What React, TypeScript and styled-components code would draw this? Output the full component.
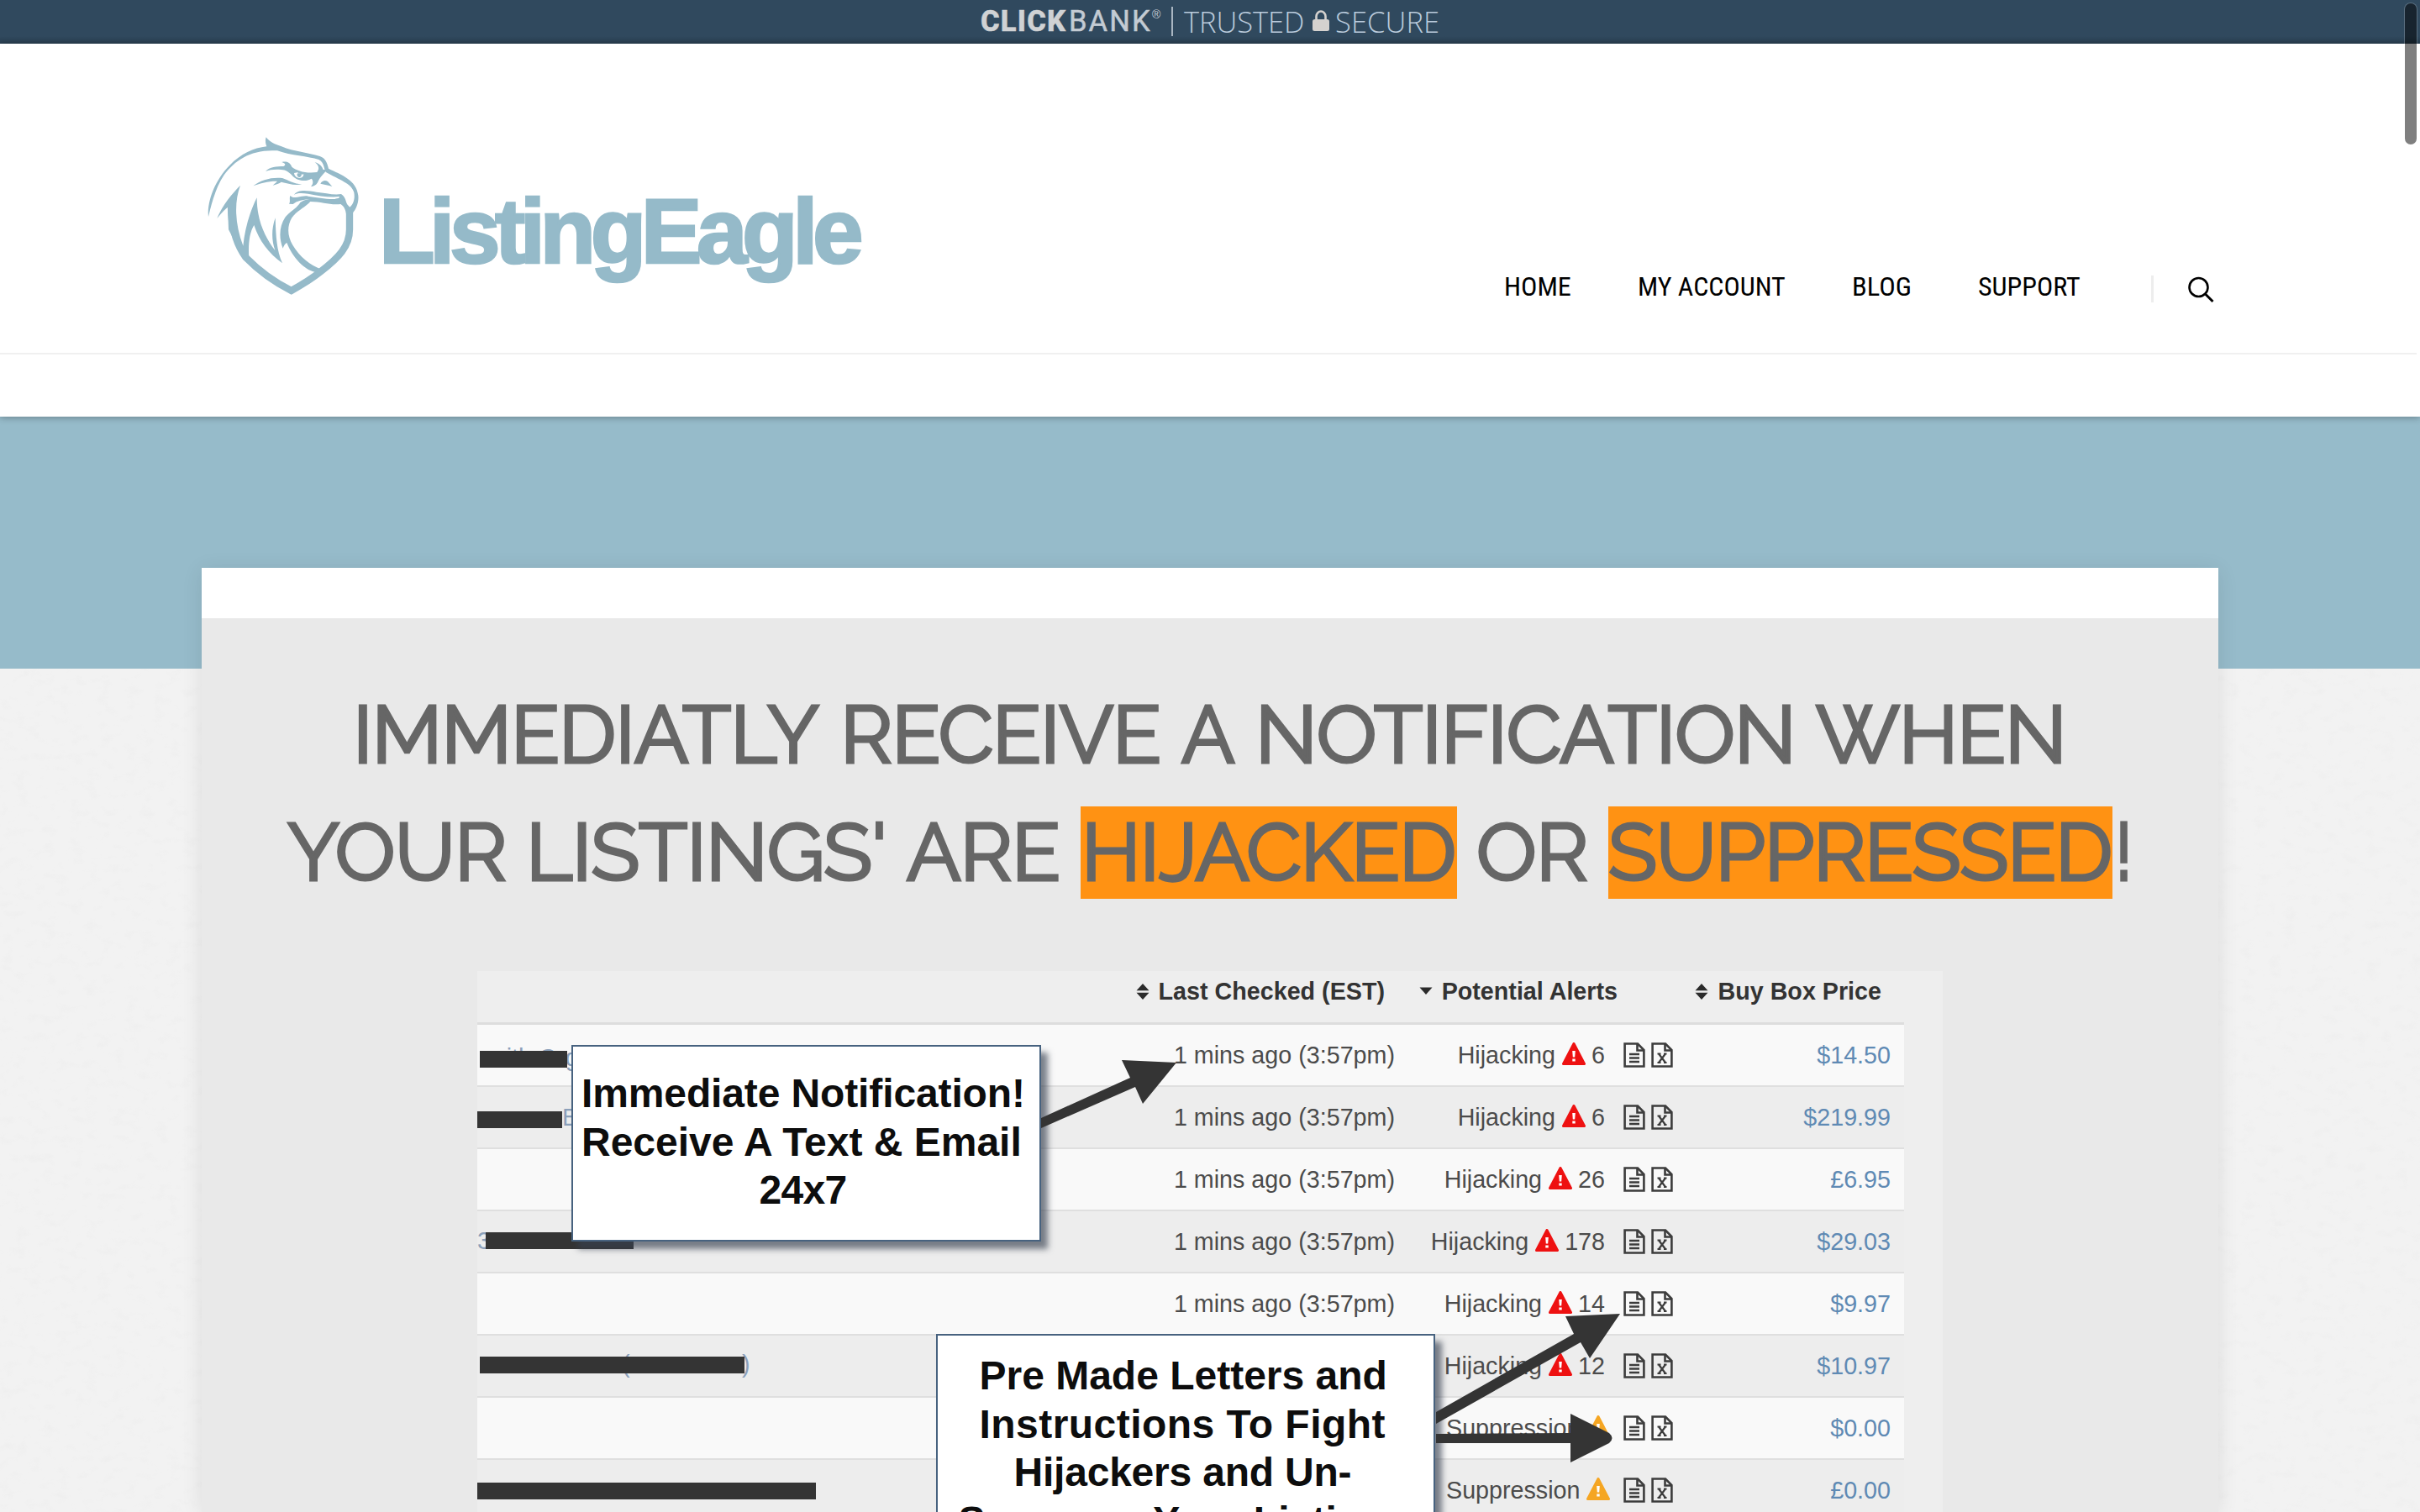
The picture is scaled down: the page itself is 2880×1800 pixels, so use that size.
import React, { useLayoutEffect, useRef, useState } from "react";
import styled, { createGlobalStyle } from "styled-components";

const GlobalStyle = createGlobalStyle`
  * { box-sizing: border-box; }
  html, body { margin: 0; padding: 0; background: #f2f2f2; }
  body { overflow: hidden; font-family: "Liberation Sans", Arial, sans-serif; }
`;

/* ---------- text fitted to a given ink width ---------- */

const FitBox = styled.span<{ $w: number }>`
  display: inline-block;
  flex: none;
  width: ${(p) => p.$w}px;
  white-space: nowrap;
  text-align: left;
`;

const FitInner = styled.span`
  display: inline-block;
  transform-origin: 0 50%;
  font-variant-ligatures: none;
`;

type FitProps = { w: number; children: string; stretch?: boolean };

function Fit({ w, children, stretch }: FitProps) {
  const ref = useRef<HTMLSpanElement>(null);
  const [style, setStyle] = useState<React.CSSProperties>({});

  useLayoutEffect(() => {
    const ctx = document.createElement("canvas").getContext("2d");
    if (!ref.current || !ctx) return;
    const cs = getComputedStyle(ref.current);
    ctx.font = `${cs.fontWeight} ${cs.fontSize} ${cs.fontFamily}`;
    const m = ctx.measureText(children);
    const left = -m.actualBoundingBoxLeft;
    const ink = m.actualBoundingBoxRight + m.actualBoundingBoxLeft;
    if (stretch || children.length < 2) {
      const s = w / ink;
      setStyle({ transform: `translateX(${left * -s}px) scaleX(${s})` });
    } else {
      setStyle({
        letterSpacing: (w - ink) / (children.length - 1),
        transform: `translateX(${-left}px)`,
      });
    }
  }, [w, children, stretch]);

  return (
    <FitBox $w={w}>
      <FitInner ref={ref} style={style}>
        {children}
      </FitInner>
    </FitBox>
  );
}

/* ---------- page ---------- */

const Page = styled.div`
  position: relative;
  width: 2880px;
  height: 1800px;
  overflow: hidden;
  background: #f2f2f2;
`;

const Paper = styled.svg`
  position: absolute;
  left: 0;
  top: 796px;
  width: 2880px;
  height: 1004px;
`;

const TrustBar = styled.div`
  display: flex;
  height: 52px;
  padding-left: 1168px;
  background: linear-gradient(#30495e 0, #30495e 43px, #2a4052 52px);
  color: #c9d0d8;
  font-size: 34.5px;
  line-height: 51px;
`;

const Brand = styled.div<{ $bold?: boolean; $gap?: number }>`
  font-family: Roboto, sans-serif;
  font-weight: ${(p) => (p.$bold ? 800 : 400)};
  color: ${(p) => (p.$bold ? "#d0d2d4" : "#c3cbd3")};
  -webkit-text-stroke: 0.5px;
  margin-left: ${(p) => p.$gap ?? 0}px;
`;

const Registered = styled.div`
  margin-left: 2px;
  width: 11px;
  font-size: 14px;
  line-height: 35px;
`;

const TrustRule = styled.div`
  width: 2px;
  height: 35px;
  margin: 8px 13px 0 12px;
  background: #a9b6c2;
`;

const TrustWord = styled.div`
  font-family: "Open Sans", sans-serif;
  font-weight: 300;
  color: #b9cadb;
`;

const Lock = styled.svg`
  width: 20px;
  height: 25px;
  margin: 12px 8px 0 11px;
`;

const Header = styled.header`
  position: relative;
  z-index: 1;
  height: 444px;
  background: #fff;
  box-shadow: 0 1px 8px rgba(0, 0, 0, 0.32);
`;

const HeaderMain = styled.div`
  display: flex;
  width: 2876px;
  height: 370px;
  border-bottom: 2px solid #f0f0f0;
  padding-left: 220px;
`;

const Eagle = styled.svg`
  width: 240px;
  height: 230px;
  margin-top: 88px;
`;

const LogoName = styled.div`
  margin: 161px 0 0 -2px;
  width: 567px;
  font-weight: 700;
  font-size: 109px;
  line-height: 124px;
  color: #95bac9;
  -webkit-text-stroke: 2.6px #95bac9;
`;

const Nav = styled.nav`
  display: flex;
  margin-left: 767px;
  padding-top: 269px;
  font-family: "Roboto Condensed", Roboto, sans-serif;
  font-size: 32px;
  line-height: 40px;
  color: #000;
`;

const NavLink = styled.a<{ $gap: number }>`
  margin-right: ${(p) => p.$gap}px;
`;

const NavRule = styled.div`
  width: 3px;
  height: 32px;
  margin-top: 7px;
  background: #ededed;
`;

const SearchIcon = styled.svg`
  width: 32px;
  height: 32px;
  margin: 8px 0 0 41px;
`;

const HeroBand = styled.div`
  position: relative;
  height: 300px;
  background: #96bbca;
`;

const Panel = styled.main`
  position: relative;
  width: 2400px;
  height: 1124px;
  margin: -120px auto 0;
  padding-top: 60px;
  background: #fff;
  box-shadow: 0 3px 24px rgba(0, 0, 0, 0.09);
`;

const Feature = styled.section`
  height: 1064px;
  padding-top: 69px;
  background: #e9e9e9;
`;

const HeadLine = styled.div<{ $left: number }>`
  display: flex;
  height: 140px;
  padding-left: ${(p) => p.$left}px;
  font-family: Raleway, Lato, sans-serif;
  font-size: 95.5px;
  line-height: 139px;
  color: #666;
  -webkit-text-stroke: 3.2px #666;
`;

const Word = styled.span<{ $gap: number }>`
  margin-right: ${(p) => p.$gap}px;
`;

const Mark = styled.span<{ $gap: number; $pad: number; $w: number }>`
  width: ${(p) => p.$w}px;
  height: 110px;
  margin: 15px ${(p) => p.$gap}px 0 0;
  padding-left: ${(p) => p.$pad}px;
  line-height: 109px;
  background: #ff9213;
`;

/* ---------- alert table ---------- */

const Shot = styled.div`
  position: relative;
  width: 1744px;
  height: 644px;
  margin: 71px 0 0 328px;
  overflow: hidden;
  background: #eeeeee;
  font-size: 28.7px;
  color: #4b4b4b;
`;

const TableHead = styled.div`
  display: flex;
  align-items: center;
  width: 1698px;
  height: 64px;
  padding-bottom: 12px;
  border-bottom: 3px solid #dddddd;
  font-weight: 700;
  color: #333;
`;

const HeadCell = styled.div<{ $w: number }>`
  display: flex;
  justify-content: flex-end;
  align-items: center;
  gap: 11px;
  width: ${(p) => p.$w}px;
`;

const Row = styled.div<{ $odd: boolean }>`
  display: flex;
  align-items: center;
  width: 1698px;
  height: 74px;
  border-bottom: 2px solid #dfdfdf;
  background: ${(p) => (p.$odd ? "#f9f9f9" : "#ededed")};
`;

const Product = styled.div`
  position: relative;
  width: 778px;
  height: 72px;
`;

const Scrap = styled.span<{ $x: number; $y: number }>`
  position: absolute;
  left: ${(p) => p.$x}px;
  top: ${(p) => p.$y}px;
  line-height: 32px;
  color: #8ba0ba;
`;

const Redaction = styled.div<{ $x: number; $y: number; $w: number }>`
  position: absolute;
  left: ${(p) => p.$x}px;
  top: ${(p) => p.$y}px;
  width: ${(p) => p.$w}px;
  height: 20px;
  background: #343434;
`;

const Checked = styled.div`
  width: 314px;
  margin-right: 2px;
  text-align: right;
`;

const Alert = styled.div<{ $bare: boolean }>`
  display: flex;
  justify-content: flex-end;
  align-items: center;
  gap: 7.5px;
  width: ${(p) => (p.$bare ? 254 : 248)}px;
  margin-right: ${(p) => (p.$bare ? 16 : 22)}px;
`;

const Triangle = styled.svg`
  width: 28px;
  height: 27px;
  margin-top: -4px;
`;

const Docs = styled.div`
  display: flex;
  gap: 7px;
`;

const Doc = styled.svg`
  width: 26px;
  height: 30px;
`;

const Price = styled.div`
  flex: 1;
  padding-right: 16px;
  text-align: right;
  color: #5f8ab4;
`;

const Callout = styled.div<{ $x: number; $y: number; $w: number; $h: number; $pad: number; $shift: number }>`
  position: absolute;
  left: ${(p) => p.$x}px;
  top: ${(p) => p.$y}px;
  width: ${(p) => p.$w}px;
  height: ${(p) => p.$h}px;
  padding: ${(p) => p.$pad}px ${(p) => p.$shift}px 0 0;
  border: 2px solid #47627f;
  background: #fff;
  box-shadow: 8px 9px 7px rgba(55, 65, 80, 0.65);
  display: flex;
  flex-direction: column;
  align-items: center;
  font-weight: 700;
  font-size: 48px;
  line-height: 57.6px;
  color: #0d0d0d;
`;

const Arrows = styled.svg`
  position: absolute;
  left: 0;
  top: 0;
  width: 1744px;
  height: 644px;
`;

const ScrollThumb = styled.div`
  position: absolute;
  z-index: 2;
  left: 2862px;
  top: 4px;
  width: 14px;
  height: 168px;
  border-radius: 7px;
  background: rgba(0, 0, 0, 0.5);
  box-shadow: 0 0 0 1px rgba(255, 255, 255, 0.2);
`;

type AlertRow = { kind: string; count?: string; price: string };

const rows: AlertRow[] = [
  { kind: "Hijacking", count: "6", price: "$14.50" },
  { kind: "Hijacking", count: "6", price: "$219.99" },
  { kind: "Hijacking", count: "26", price: "£6.95" },
  { kind: "Hijacking", count: "178", price: "$29.03" },
  { kind: "Hijacking", count: "14", price: "$9.97" },
  { kind: "Hijacking", count: "12", price: "$10.97" },
  { kind: "Suppression", price: "$0.00" },
  { kind: "Suppression", price: "£0.00" },
];

const hidden: Record<number, { x: number; y: number; w: number }> = {
  0: { x: 3, y: 31, w: 104 },
  1: { x: 0, y: 29, w: 101 },
  3: { x: 10, y: 25, w: 176 },
  5: { x: 3, y: 25, w: 315 },
  7: { x: 0, y: 27, w: 403 },
};

const scraps: Record<number, { x: number; y: number; text: string }[]> = {
  0: [{ x: 14, y: 23, text: "with Org" }],
  1: [{ x: 101, y: 20, text: "Ba" }],
  3: [{ x: 0, y: 19, text: "3" }],
  5: [{ x: 315, y: 18, text: ")" }, { x: 172, y: 18, text: "(" }],
};

function SortIcon() {
  return (
    <svg width="16" height="19" viewBox="0 0 16 19">
      <path d="M8 0 15.5 8.300H.5zM8 19 .5 10.700h15z" fill="#2b2b2b" />
    </svg>
  );
}

function CaretIcon() {
  return (
    <svg width="16" height="19" viewBox="0 0 16 19">
      <path d="M.5 4.500h15L8 13z" fill="#2b2b2b" />
    </svg>
  );
}

function WarningIcon({ color }: { color: string }) {
  return (
    <Triangle viewBox="0 0 28 27">
      <path d="M14 1.500 26.500 25.500H1.500z" fill={color} stroke={color} strokeWidth="3" strokeLinejoin="round" />
      <path d="M12.2 10h3.6l-.6 7.5h-2.4zM12.3 19.4h3.4v3.2h-3.4z" fill="#fff" />
    </Triangle>
  );
}

function FileIcon({ sheet }: { sheet?: boolean }) {
  return (
    <Doc viewBox="0 0 26 30" fill="none" stroke="#3c3c3c" strokeWidth="2.6">
      <path d="M1.6 1.5H17L24.4 9v19.500H1.600z" />
      <path d="M16.500 1.500V9.500H24.400" />
      {sheet ? (
        <path d="M9 13.500 17 24M17 13.500 9 24M7.500 13.500h4M15 13.500h3.500M7.500 24h4M15 24h3.500" strokeWidth="2.200" />
      ) : (
        <path d="M7 14h12M7 18.500h12M7 23h12" />
      )}
    </Doc>
  );
}

function EagleMark() {
  return (
    <Eagle viewBox="0 0 720 690" fill="#95bac9">
      <path d="M84 354C78 300 108 222 160 170C200 130 245 108 292 103C288 92 286 82 290 70C302 86 322 96 345 103C390 122 440 125 482 138C500 144 508 160 513 182C560 205 612 222 619 278C622 305 610 328 600 340L586 322C602 310 608 290 604 268C596 235 550 222 505 196C496 190 500 160 478 150C440 138 380 136 330 118C240 112 180 150 140 205C110 250 96 305 84 354Z" />
      <path
        d="M165 312C165 400 185 455 218 500C262 545 320 588 380 618C420 596 460 570 485 550C550 500 588 460 588 400L588 328"
        fill="none"
        stroke="#95bac9"
        strokeWidth="25"
      />
      <path d="M115 360C130 322 160 280 198 242C176 300 178 380 208 458C214 400 230 340 257 286C257 370 288 430 322 474C310 440 308 400 323 358C325 425 328 475 348 520C300 485 265 440 247 384C230 412 226 452 229 500L208 500L156 400L153 320C140 330 127 345 115 360Z" />
      <path d="M350 467C335 430 337 388 358 356C376 334 402 322 412 303C440 284 470 290 500 292C530 295 548 288 556 284L598 330L577 350C574 328 568 316 556 309C520 314 490 300 448 300C428 322 398 334 382 358C364 388 366 424 385 455C410 497 446 526 488 542L466 552C425 543 385 500 364 447C358 450 353 458 350 467Z" />
      <path d="M372 308C378 300 372 290 376 279C386 288 392 284 402 284C416 282 430 278 440 281C474 286 530 296 552 288C560 296 566 304 580 312C574 296 572 282 558 273C530 278 500 268 470 266C440 262 405 254 390 276C400 268 420 270 440 272C480 280 520 286 552 282L548 296C510 300 470 290 438 292C418 294 400 298 386 309Z" />
      <path d="M288 192C302 176 328 174 352 174C364 168 356 162 346 159C362 155 376 160 382 176C400 190 430 200 472 195C482 182 478 170 464 160C482 164 490 176 494 186L508 186C496 200 482 212 474 232C468 242 460 246 450 246C460 236 458 224 452 218C430 232 400 224 386 210C374 196 360 186 344 186C322 184 304 186 288 192Z" />
      <path d="M390 198C392 220 424 222 424 202C416 206 408 200 402 196Z" fill="#fff" />
      <path d="M404 198a8 8 0 1 0 12 4z" />
      <path d="M244 244C272 222 310 212 348 216C368 222 390 238 418 238C390 244 366 234 344 230C340 234 328 238 314 242C322 234 328 230 330 227C300 226 270 234 244 244Z" />
      <path d="M484 236C490 224 502 222 510 228L526 246C512 240 498 240 484 236Z" />
    </Eagle>
  );
}

function PaperTexture() {
  return (
    <Paper>
      <filter id="paper" x="0" y="0" width="100%" height="100%">
        <feTurbulence type="fractalNoise" baseFrequency="0.06 0.09" numOctaves="3" seed="4" />
        <feColorMatrix values="0 0 0 0 0.45  0 0 0 0 0.45  0 0 0 0 0.45  0 0 0 1.2 -0.62" />
      </filter>
      <rect width="100%" height="100%" filter="url(#paper)" opacity="0.1" />
    </Paper>
  );
}

export default function App() {
  return (
    <Page>
      <GlobalStyle />
      <PaperTexture />
      <TrustBar>
        <Brand $bold>
          <Fit w={101}>CLICK</Fit>
        </Brand>
        <Brand $gap={5}>
          <Fit w={95}>BANK</Fit>
        </Brand>
        <Registered>®</Registered>
        <TrustRule />
        <TrustWord>
          <Fit w={142}>TRUSTED</Fit>
        </TrustWord>
        <Lock viewBox="0 0 20 25">
          <rect y="11" width="20" height="14" rx="2.500" fill="#d5d2cf" />
          <path d="M4.500 12V7.500a5.500 6 0 0 1 11 0V12" fill="none" stroke="#d5d2cf" strokeWidth="2.600" />
        </Lock>
        <TrustWord>
          <Fit w={121}>SECURE</Fit>
        </TrustWord>
      </TrustBar>

      <Header>
        <HeaderMain>
          <EagleMark />
          <LogoName>
            <Fit w={566}>ListingEagle</Fit>
          </LogoName>
          <Nav>
            <NavLink $gap={82}>
              <Fit w={77} stretch>HOME</Fit>
            </NavLink>
            <NavLink $gap={82}>
              <Fit w={173} stretch>MY ACCOUNT</Fit>
            </NavLink>
            <NavLink $gap={82}>
              <Fit w={67} stretch>BLOG</Fit>
            </NavLink>
            <NavLink $gap={85}>
              <Fit w={120} stretch>SUPPORT</Fit>
            </NavLink>
            <NavRule />
            <SearchIcon viewBox="0 0 32 32" fill="none" stroke="#000" strokeWidth="2.600">
              <circle cx="12.500" cy="13" r="11" />
              <path d="M20.500 21 29.500 30" strokeWidth="3" />
            </SearchIcon>
          </Nav>
        </HeaderMain>
      </Header>

      <HeroBand />
      <Panel>
        <Feature>
          <HeadLine $left={188}>
            <Word $gap={34}><Fit w={546}>IMMEDIATLY</Fit></Word>
            <Word $gap={28}><Fit w={371}>RECEIVE</Fit></Word>
            <Word $gap={33}><Fit w={62}>A</Fit></Word>
            <Word $gap={32}><Fit w={628}>NOTIFICATION</Fit></Word>
            <Word $gap={0}><Fit w={290}>WHEN</Fit></Word>
          </HeadLine>
          <HeadLine $left={103}>
            <Word $gap={34}><Fit w={257}>YOUR</Fit></Word>
            <Word $gap={30}><Fit w={416}>LISTINGS'</Fit></Word>
            <Word $gap={27}><Fit w={179}>ARE</Fit></Word>
            <Mark $w={448} $pad={9} $gap={27}><Fit w={434}>HIJACKED</Fit></Mark>
            <Word $gap={27}><Fit w={126}>OR</Fit></Word>
            <Mark $w={600} $pad={3} $gap={10}><Fit w={593}>SUPPRESSED</Fit></Mark>
            <Word $gap={0}><Fit w={7}>!</Fit></Word>
          </HeadLine>

          <Shot>
            <TableHead>
              <HeadCell $w={1080}><SortIcon />Last Checked (EST)</HeadCell>
              <HeadCell $w={277}><CaretIcon />Potential Alerts</HeadCell>
              <HeadCell $w={314}><SortIcon />Buy Box Price</HeadCell>
            </TableHead>
            {rows.map((row, i) => (
              <Row key={i} $odd={i % 2 === 0}>
                <Product>
                  {(scraps[i] || []).map((s) => (
                    <Scrap key={s.text} $x={s.x} $y={s.y}>{s.text}</Scrap>
                  ))}
                  {hidden[i] && <Redaction $x={hidden[i].x} $y={hidden[i].y} $w={hidden[i].w} />}
                </Product>
                <Checked>1 mins ago (3:57pm)</Checked>
                <Alert $bare={!row.count}>
                  {row.kind}
                  <WarningIcon color={row.count ? "#ee1111" : "#f5a623"} />
                  {row.count}
                </Alert>
                <Docs>
                  <FileIcon />
                  <FileIcon sheet />
                </Docs>
                <Price>{row.price}</Price>
              </Row>
            ))}
            <Callout $x={112} $y={88} $w={559} $h={234} $pad={27} $shift={8}>
              <Fit w={521}>Immediate Notification!</Fit>
              <Fit w={521}>Receive A Text &amp; Email</Fit>
              <Fit w={102}>24x7</Fit>
            </Callout>
            <Callout $x={546} $y={432} $w={594} $h={330} $pad={19} $shift={5}>
              <Fit w={480}>Pre Made Letters and</Fit>
              <Fit w={480}>Instructions To Fight</Fit>
              <Fit w={398}>Hijackers and Un-</Fit>
              <Fit w={534}>Suppress Your Listings</Fit>
            </Callout>
            <Arrows viewBox="568 1156 1744 644" fill="#343434">
              <path d="M1239 1331 1345 1283 1335 1262 1400 1265 1360 1314 1351 1294 1239 1343z" />
              <path d="M1709 1681 1873 1588 1863 1567 1928 1564 1892 1617 1881 1598 1709 1695z" />
              <path d="M1709 1707 1869 1706V1683L1915 1706Q1922 1712 1915 1718L1869 1741V1718H1709z" />
            </Arrows>
          </Shot>
        </Feature>
      </Panel>
      <ScrollThumb />
    </Page>
  );
}
